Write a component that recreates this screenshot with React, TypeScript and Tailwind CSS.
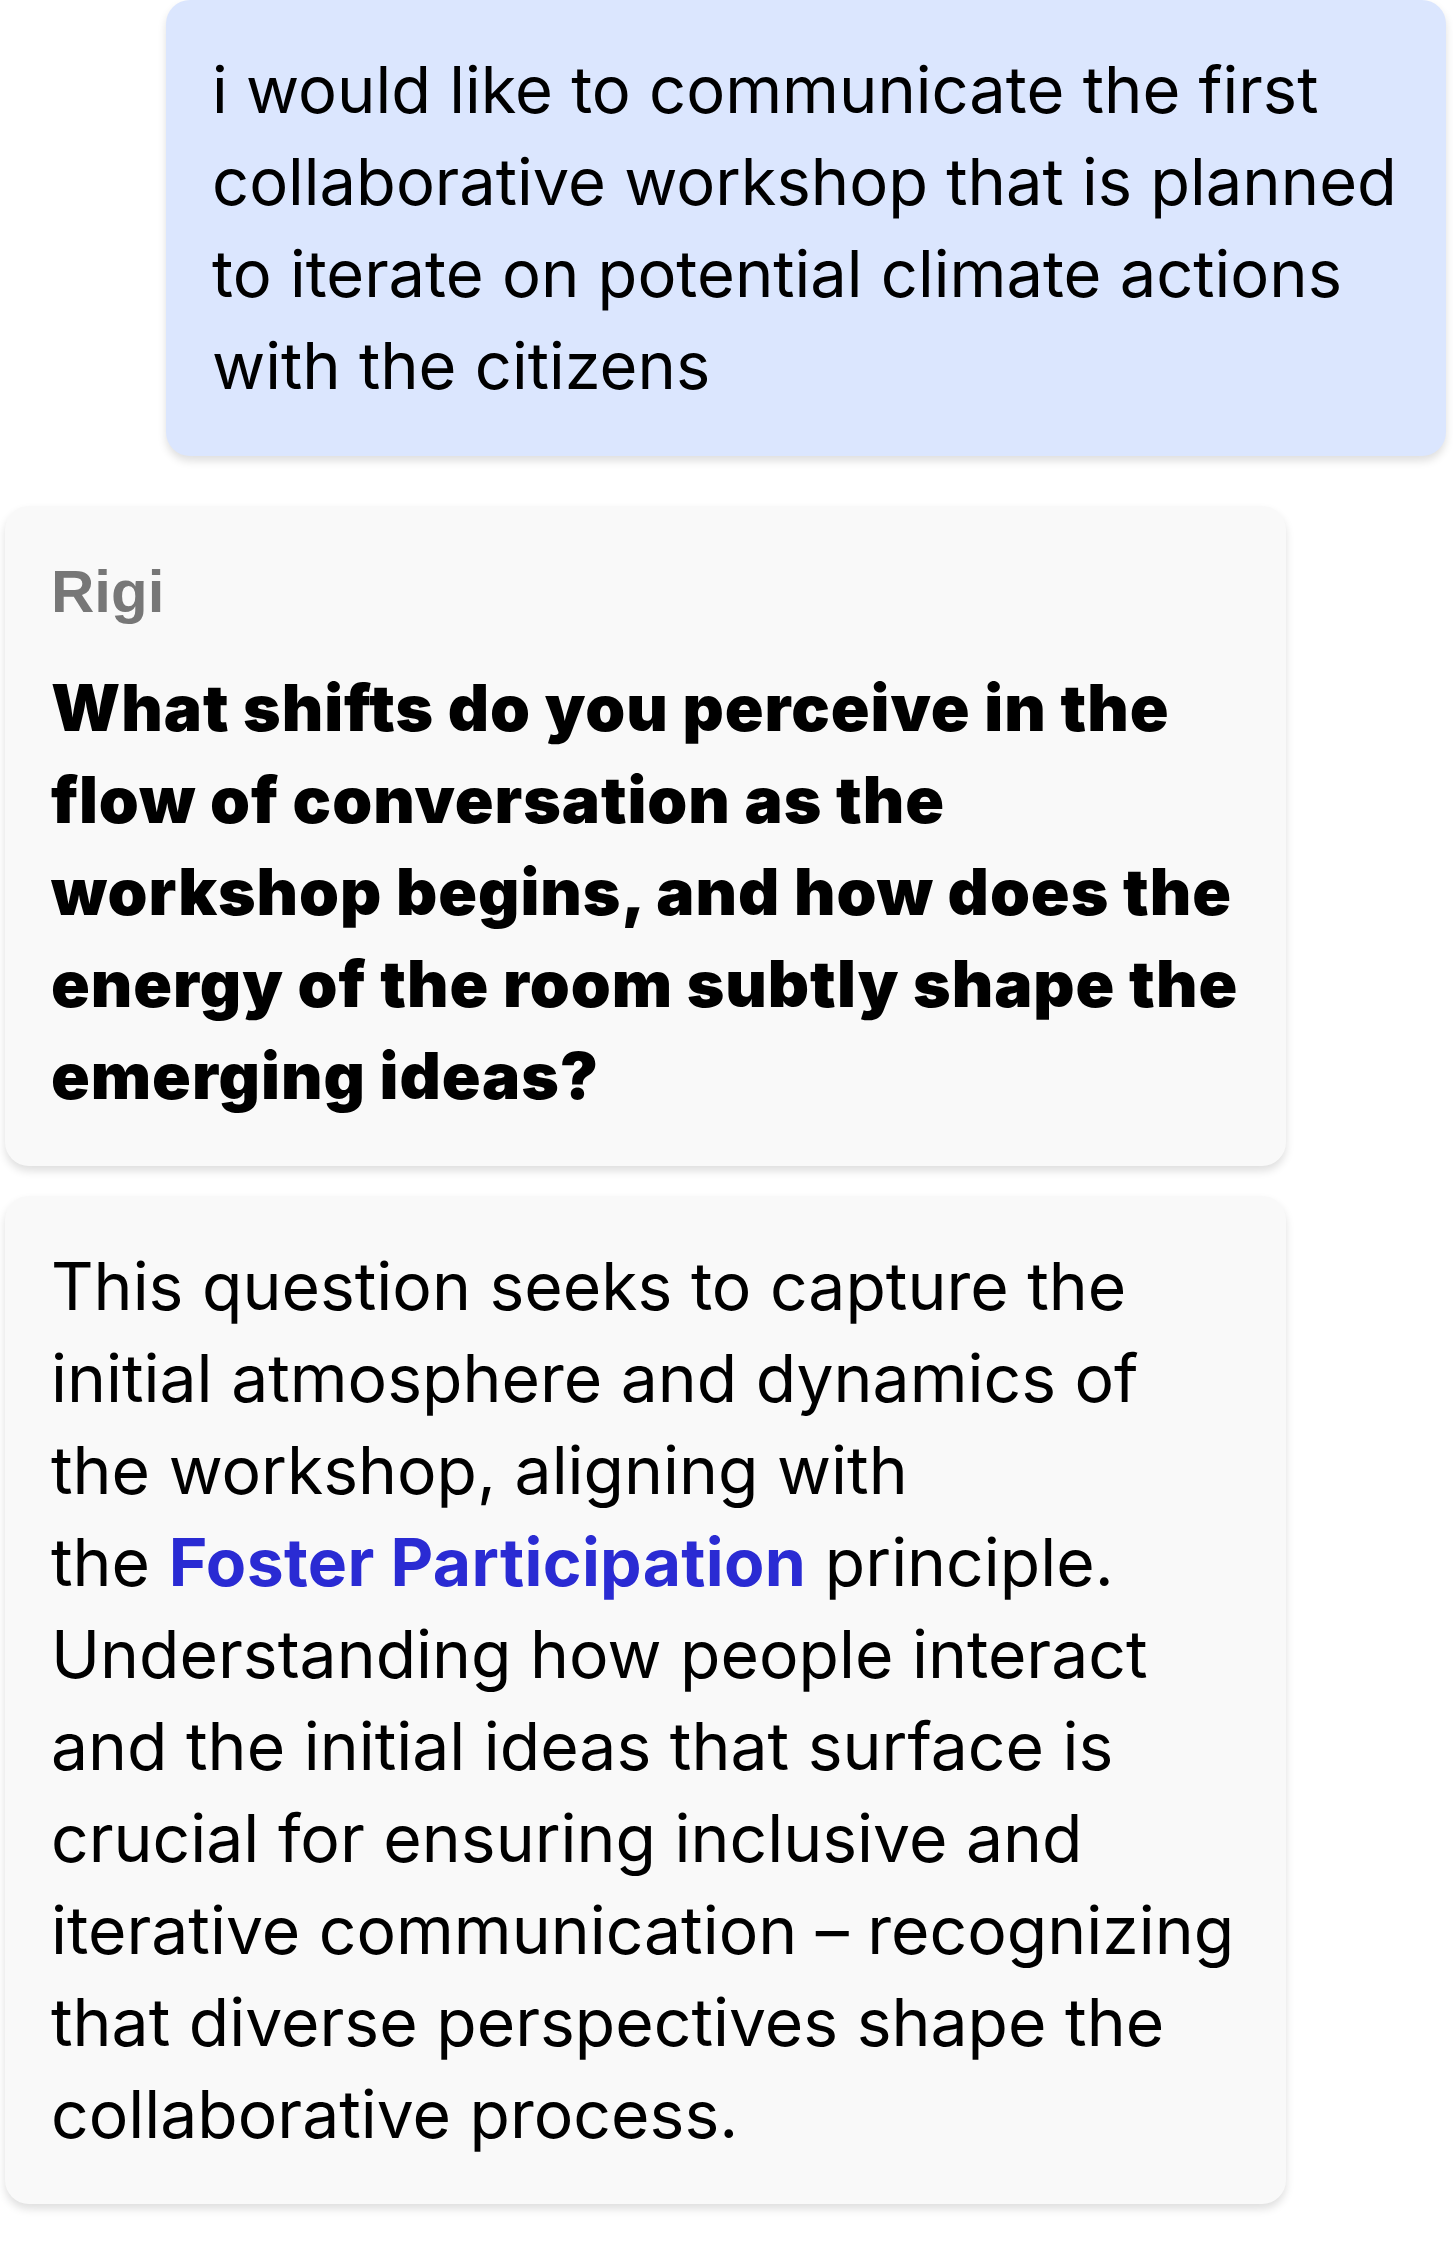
const userLines = [
  'i would like to communicate the first',
  'collaborative workshop that is planned',
  'to iterate on potential climate actions',
  'with the citizens',
];

const questionLines = [
  'What shifts do you perceive in the',
  'flow of conversation as the',
  'workshop begins, and how does the',
  'energy of the room subtly shape the',
  'emerging ideas?',
];

export default function App() {
  return (
    <div className="min-h-screen bg-white font-['Inter','Noto_Sans',sans-serif] text-black">
      <div className="flex flex-col pl-[5px] pr-[7px]">
        {/* user message */}
        <div className="self-end w-[1280px] rounded-[24px] bg-[#dbe6fe] px-[46px] py-[44px] text-[65px] leading-[92px] shadow-[0_5px_8px_rgba(0,0,0,0.13)]">
          {userLines.map((line) => (
            <div key={line} className="whitespace-nowrap">{line}</div>
          ))}
        </div>

        {/* assistant question */}
        <div className="mt-[50px] w-[1281px] rounded-[24px] bg-[#f9f9f9] px-[46px] py-[44px] shadow-[0_5px_8px_rgba(0,0,0,0.13)]">
          <div className="mb-[28px] font-['Liberation_Sans','Arial',sans-serif] text-[60px] leading-[84px] font-bold text-[#777777]">Rigi</div>
          <div className="text-[64px] leading-[92px] font-black tracking-[0.015em]">
            {questionLines.map((line) => (
              <div key={line} className="whitespace-nowrap">{line}</div>
            ))}
          </div>
        </div>

        {/* explanation */}
        <div className="mt-[30px] w-[1281px] rounded-[24px] bg-[#f9f9f9] px-[46px] py-[44px] text-[66px] leading-[92px] shadow-[0_5px_8px_rgba(0,0,0,0.13)]">
          <div className="whitespace-nowrap">This question seeks to capture the</div>
          <div className="whitespace-nowrap">initial atmosphere and dynamics of</div>
          <div className="whitespace-nowrap">the workshop, aligning with</div>
          <div className="whitespace-nowrap">
            the <span className="font-bold tracking-[0.005em] text-[#2a2bd3]">Foster Participation</span> principle.
          </div>
          <div className="whitespace-nowrap">Understanding how people interact</div>
          <div className="whitespace-nowrap">and the initial ideas that surface is</div>
          <div className="whitespace-nowrap">crucial for ensuring inclusive and</div>
          <div className="whitespace-nowrap">iterative communication – recognizing</div>
          <div className="whitespace-nowrap">that diverse perspectives shape the</div>
          <div className="whitespace-nowrap">collaborative process.</div>
        </div>
      </div>
    </div>
  );
}
